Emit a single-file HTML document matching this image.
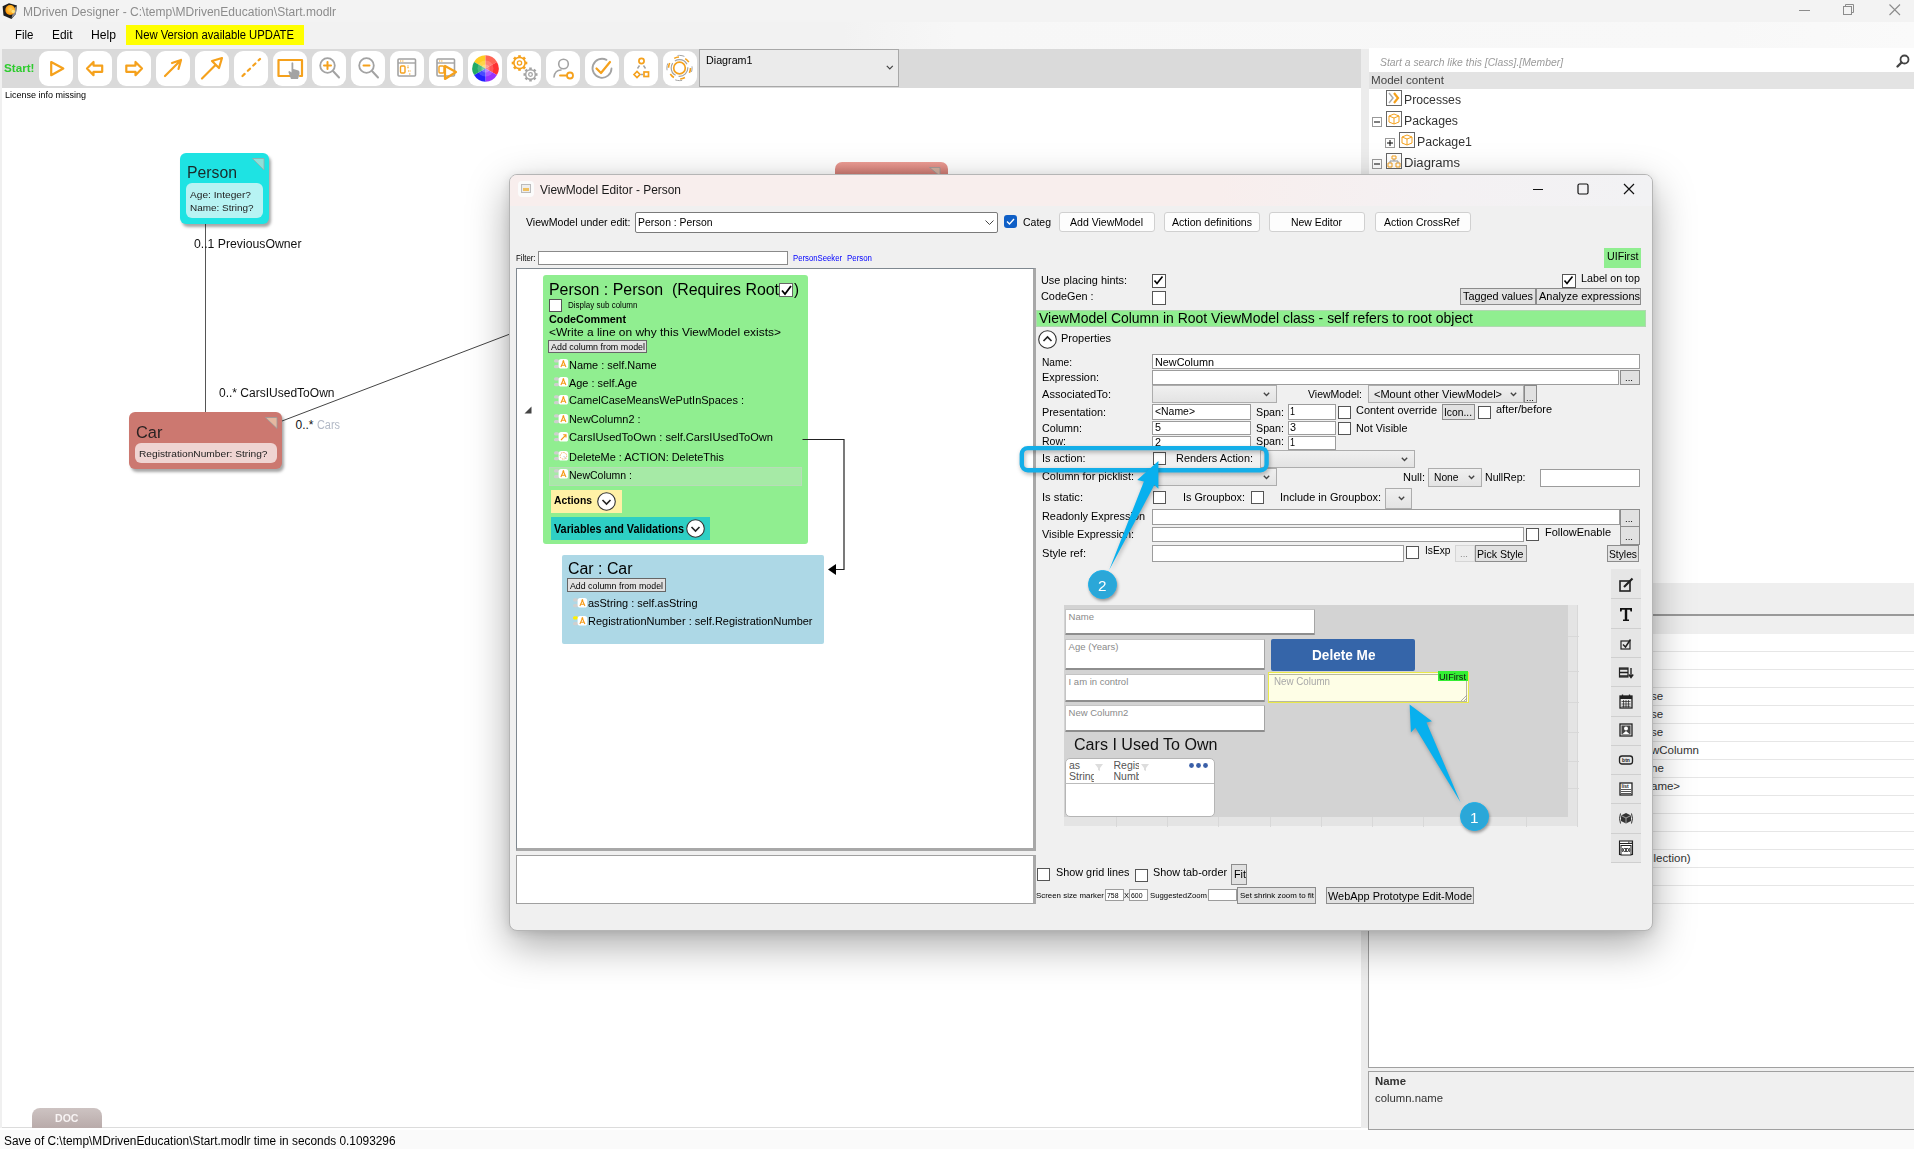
<!DOCTYPE html>
<html><head><meta charset="utf-8">
<style>
*{box-sizing:border-box;margin:0;padding:0}
html,body{width:1914px;height:1149px;overflow:hidden;background:#f0f0f0;font-family:"Liberation Sans",sans-serif;font-size:12px;color:#000;position:relative}
.a{position:absolute}
.t{position:absolute;white-space:pre;line-height:1}
.s{position:absolute;overflow:visible}
</style></head><body>
<div class="a" style="left:0px;top:0px;width:1914px;height:22px;background:#f3f3f3"></div>
<div class="a" style="left:0px;top:22px;width:1914px;height:27px;background:linear-gradient(90deg,#f2f2f2 0%,#f2f2f2 44%,#f7f7f7 50%,#f8f8f8 90%,#fafafa 100%)"></div>
<svg class="s" style="left:0px;top:0px;" width="20" height="22" viewBox="0 0 20 22"><defs><radialGradient id="sg" cx="0.55" cy="0.45" r="0.6"><stop offset="0" stop-color="#ffd060"/><stop offset="0.6" stop-color="#ffae20"/><stop offset="1" stop-color="#ff8a00"/></radialGradient></defs><polygon points="9,3.2 17,5.5 15.8,14 11.5,19 3.5,15.5 2.6,6.3" fill="#1e1e1e"/><polygon points="14.5,8 16.8,5.8 15.8,14 11.5,18.5 12.5,14" fill="#8a8a90"/><circle cx="10.2" cy="10" r="4.9" fill="url(#sg)"/><circle cx="13.3" cy="11.5" r="1.8" fill="#fff6a0" opacity="0.7"/></svg>
<div class="t" style="left:22.70px;top:6.00px;font-size:12px;color:#8c8c8c;transform:scaleX(1.0029);transform-origin:0 0;">MDriven Designer - C:\temp\MDrivenEducation\Start.modlr</div>
<div class="a" style="left:1799px;top:10px;width:11px;height:1px;background:#8c8c8c"></div>
<svg class="s" style="left:1843px;top:4px;" width="12" height="12" viewBox="0 0 12 12"><rect x="0.5" y="2.5" width="8" height="8" fill="none" stroke="#8c8c8c"/><path d="M2.5 2.5V0.5H10.5V8.5H8.5" fill="none" stroke="#8c8c8c"/></svg>
<svg class="s" style="left:1889px;top:4px;" width="12" height="12" viewBox="0 0 12 12"><path d="M0.5 0.5L11 11M11 0.5L0.5 11" stroke="#8c8c8c" stroke-width="1.1"/></svg>
<div class="t" style="left:15.20px;top:29.00px;font-size:12.5px;transform:scaleX(0.9185);transform-origin:0 0;">File</div>
<div class="t" style="left:52.00px;top:29.00px;font-size:12.5px;transform:scaleX(0.9518);transform-origin:0 0;">Edit</div>
<div class="t" style="left:91.00px;top:29.00px;font-size:12.5px;transform:scaleX(0.9725);transform-origin:0 0;">Help</div>
<div class="a" style="left:126px;top:25px;width:178px;height:20px;background:#ffff00"></div>
<div class="t" style="left:135.40px;top:29.00px;font-size:12.5px;transform:scaleX(0.9022);transform-origin:0 0;">New Version available UPDATE</div>
<div class="a" style="left:2px;top:49px;width:1359px;height:39px;background:#dadada"></div>
<div class="t" style="left:4.00px;top:63.00px;font-size:10.5px;font-weight:bold;color:#2ecc2e;transform:scaleX(1.1124);transform-origin:0 0;">Start!</div>
<div class="a" style="left:39px;top:51px;width:34px;height:35px;background:#fff;border-radius:9px"></div>
<div class="a" style="left:78px;top:51px;width:34px;height:35px;background:#fff;border-radius:9px"></div>
<div class="a" style="left:117px;top:51px;width:34px;height:35px;background:#fff;border-radius:9px"></div>
<div class="a" style="left:156px;top:51px;width:34px;height:35px;background:#fff;border-radius:9px"></div>
<div class="a" style="left:195px;top:51px;width:34px;height:35px;background:#fff;border-radius:9px"></div>
<div class="a" style="left:234px;top:51px;width:34px;height:35px;background:#fff;border-radius:9px"></div>
<div class="a" style="left:273px;top:51px;width:34px;height:35px;background:#fff;border-radius:9px"></div>
<div class="a" style="left:312px;top:51px;width:34px;height:35px;background:#fff;border-radius:9px"></div>
<div class="a" style="left:351px;top:51px;width:34px;height:35px;background:#fff;border-radius:9px"></div>
<div class="a" style="left:390px;top:51px;width:34px;height:35px;background:#fff;border-radius:9px"></div>
<div class="a" style="left:429px;top:51px;width:34px;height:35px;background:#fff;border-radius:9px"></div>
<div class="a" style="left:468px;top:51px;width:34px;height:35px;background:#fff;border-radius:9px"></div>
<div class="a" style="left:507px;top:51px;width:34px;height:35px;background:#fff;border-radius:9px"></div>
<div class="a" style="left:546px;top:51px;width:34px;height:35px;background:#fff;border-radius:9px"></div>
<div class="a" style="left:585px;top:51px;width:34px;height:35px;background:#fff;border-radius:9px"></div>
<div class="a" style="left:624px;top:51px;width:34px;height:35px;background:#fff;border-radius:9px"></div>
<div class="a" style="left:663px;top:51px;width:34px;height:35px;background:#fff;border-radius:9px"></div>
<svg class="s" style="left:39px;top:51px;" width="34" height="34" viewBox="0 0 34 34"><path d="M12.2 11L24.3 17.5L12.2 24.2Z" stroke="#f5a11c" stroke-width="2.2" stroke-linecap="round" stroke-linejoin="round" fill="none"/></svg>
<svg class="s" style="left:78px;top:51px;" width="34" height="34" viewBox="0 0 34 34"><path d="M9 17.5L15.5 11V14.6H24.2V20.8H15.5V24.2Z" stroke="#f5a11c" stroke-width="2.2" stroke-linecap="round" stroke-linejoin="round" fill="none"/></svg>
<svg class="s" style="left:117px;top:51px;" width="34" height="34" viewBox="0 0 34 34"><path d="M25 17.5L18.5 11V14.6H9.3V20.8H18.5V24.2Z" stroke="#f5a11c" stroke-width="2.2" stroke-linecap="round" stroke-linejoin="round" fill="none"/></svg>
<svg class="s" style="left:156px;top:51px;" width="34" height="34" viewBox="0 0 34 34"><path d="M9 25L25 9M16 12L25 9L22.5 18" stroke="#f5a11c" stroke-width="2.2" stroke-linecap="round" stroke-linejoin="round" fill="none"/></svg>
<svg class="s" style="left:195px;top:51px;" width="34" height="34" viewBox="0 0 34 34"><path d="M7 27.5L20 14.5" stroke="#f5a11c" stroke-width="2.2" stroke-linecap="round" stroke-linejoin="round" fill="none"/><path d="M27 7L17 10L24 17Z" stroke="#f5a11c" stroke-width="2.2" stroke-linecap="round" stroke-linejoin="round" fill="none"/></svg>
<svg class="s" style="left:234px;top:51px;" width="34" height="34" viewBox="0 0 34 34"><path d="M8.5 25L26 8" stroke="#f5a11c" stroke-width="2.2" stroke-linecap="round" stroke-dasharray="3 4.5"/></svg>
<svg class="s" style="left:273px;top:51px;" width="34" height="34" viewBox="0 0 34 34"><path d="M19 25H5.5V9H29V25H27" stroke="#f5a11c" stroke-width="2.2" stroke-linecap="round" stroke-linejoin="round" fill="none"/><path d="M18 28L15.5 21.5Q15 20 16.5 20L18.5 21.5V12Q19 10.5 20.3 12V18L25.5 19.5Q27 20 26.5 23L25 28Z" fill="#a3a3a3"/></svg>
<svg class="s" style="left:312px;top:51px;" width="34" height="34" viewBox="0 0 34 34"><circle cx="15.5" cy="14.5" r="7.3" stroke="#a3a3a3" stroke-width="1.8" fill="none"/><path d="M21 20L27 26.5" stroke="#a3a3a3" stroke-width="2" stroke-linecap="round"/><path d="M15.5 11V18M12 14.5H19" stroke="#f5a11c" stroke-width="2" stroke-linecap="round"/></svg>
<svg class="s" style="left:351px;top:51px;" width="34" height="34" viewBox="0 0 34 34"><circle cx="15.5" cy="14.5" r="7.3" stroke="#a3a3a3" stroke-width="1.8" fill="none"/><path d="M21 20L27 26.5" stroke="#a3a3a3" stroke-width="2" stroke-linecap="round"/><path d="M12.5 14.5H18.5" stroke="#f5a11c" stroke-width="2" stroke-linecap="round"/></svg>
<svg class="s" style="left:390px;top:51px;" width="34" height="34" viewBox="0 0 34 34"><rect x="8" y="8" width="17.5" height="17" rx="1" stroke="#a3a3a3" stroke-width="1.6" fill="none"/><path d="M8 12H25.5" stroke="#a3a3a3" stroke-width="1.4"/><path d="M10 10H14" stroke="#f5a11c" stroke-width="1.2" stroke-dasharray="1 0.8"/><rect x="10.5" y="15" width="4.5" height="7" rx="1" stroke="#f5a11c" stroke-width="1.4" fill="none"/><path d="M18 14.5V18M18 20H21M19 23H21" stroke="#f5a11c" stroke-width="1.2" stroke-dasharray="1 0.6"/></svg>
<svg class="s" style="left:429px;top:51px;" width="34" height="34" viewBox="0 0 34 34"><rect x="8" y="8" width="17.5" height="17" rx="1" stroke="#a3a3a3" stroke-width="1.6" fill="none"/><path d="M8 12H25.5" stroke="#a3a3a3" stroke-width="1.4"/><path d="M10 10H14" stroke="#f5a11c" stroke-width="1.2" stroke-dasharray="1 0.8"/><rect x="10" y="15" width="5" height="7" rx="1" stroke="#f5a11c" stroke-width="1.4" fill="none"/><path d="M16 15V28L27 21Z" stroke="#f5a11c" stroke-width="2.2" stroke-linecap="round" stroke-linejoin="round" fill="none" fill="#fff"/></svg>
<svg class="s" style="left:468px;top:51px;" width="34" height="34" viewBox="0 0 34 34"><path d="M17.5 17.5L6.07 10.90A13.2 13.2 0 0 1 17.50 4.30Z" fill="#ffcc22"/><path d="M17.5 17.5L17.50 4.30A13.2 13.2 0 0 1 28.93 10.90Z" fill="#ff6655"/><path d="M17.5 17.5L28.93 10.90A13.2 13.2 0 0 1 28.93 24.10Z" fill="#ff3333"/><path d="M17.5 17.5L28.93 24.10A13.2 13.2 0 0 1 17.50 30.70Z" fill="#9933ff"/><path d="M17.5 17.5L17.50 30.70A13.2 13.2 0 0 1 6.07 24.10Z" fill="#2222ff"/><path d="M17.5 17.5L6.07 24.10A13.2 13.2 0 0 1 6.07 10.90Z" fill="#22aa66"/><circle cx="17.5" cy="17.5" r="8" fill="#fff" opacity="0.18"/><circle cx="17.5" cy="17.5" r="4" fill="#fff" opacity="0.25"/></svg>
<svg class="s" style="left:507px;top:51px;" width="34" height="34" viewBox="0 0 34 34"><path d="M18.10 12.00L20.30 12.00" stroke="#f5a11c" stroke-width="2.6"/><path d="M16.46 15.96L18.02 17.52" stroke="#f5a11c" stroke-width="2.6"/><path d="M12.50 17.60L12.50 19.80" stroke="#f5a11c" stroke-width="2.6"/><path d="M8.54 15.96L6.98 17.52" stroke="#f5a11c" stroke-width="2.6"/><path d="M6.90 12.00L4.70 12.00" stroke="#f5a11c" stroke-width="2.6"/><path d="M8.54 8.04L6.98 6.48" stroke="#f5a11c" stroke-width="2.6"/><path d="M12.50 6.40L12.50 4.20" stroke="#f5a11c" stroke-width="2.6"/><path d="M16.46 8.04L18.02 6.48" stroke="#f5a11c" stroke-width="2.6"/><circle cx="12.5" cy="12" r="5.6" stroke="#f5a11c" stroke-width="1.6" fill="none"/><circle cx="12.5" cy="12" r="2.13" stroke="#f5a11c" stroke-width="1.3" fill="none"/><path d="M28.30 23.50L30.50 23.50" stroke="#a3a3a3" stroke-width="2.6"/><path d="M26.89 26.89L28.45 28.45" stroke="#a3a3a3" stroke-width="2.6"/><path d="M23.50 28.30L23.50 30.50" stroke="#a3a3a3" stroke-width="2.6"/><path d="M20.11 26.89L18.55 28.45" stroke="#a3a3a3" stroke-width="2.6"/><path d="M18.70 23.50L16.50 23.50" stroke="#a3a3a3" stroke-width="2.6"/><path d="M20.11 20.11L18.55 18.55" stroke="#a3a3a3" stroke-width="2.6"/><path d="M23.50 18.70L23.50 16.50" stroke="#a3a3a3" stroke-width="2.6"/><path d="M26.89 20.11L28.45 18.55" stroke="#a3a3a3" stroke-width="2.6"/><circle cx="23.5" cy="23.5" r="4.8" stroke="#a3a3a3" stroke-width="1.4" fill="none"/><circle cx="23.5" cy="23.5" r="1.82" stroke="#a3a3a3" stroke-width="1.3" fill="none"/></svg>
<svg class="s" style="left:546px;top:51px;" width="34" height="34" viewBox="0 0 34 34"><circle cx="17.5" cy="13" r="4.8" stroke="#a3a3a3" stroke-width="1.6" fill="none"/><path d="M8 26Q9 19 15 19" stroke="#a3a3a3" stroke-width="1.6" fill="none" stroke-linecap="round"/><path d="M14 24.5H21" stroke="#f5a11c" stroke-width="1.8" stroke-linecap="round"/><circle cx="24" cy="24.5" r="3" stroke="#f5a11c" stroke-width="1.8" fill="none"/></svg>
<svg class="s" style="left:585px;top:51px;" width="34" height="34" viewBox="0 0 34 34"><path d="M26.5 17.5A9.5 9.5 0 1 1 21.5 8.9" stroke="#a3a3a3" stroke-width="1.8" fill="none" stroke-linecap="round"/><path d="M11.5 17.5L16 22L25 11" stroke="#f5a11c" stroke-width="2.2" stroke-linecap="round" stroke-linejoin="round" fill="none"/></svg>
<svg class="s" style="left:624px;top:51px;" width="34" height="34" viewBox="0 0 34 34"><circle cx="17.5" cy="10" r="2.6" stroke="#f5a11c" stroke-width="1.7" fill="none"/><path d="M10 23.5L13 20.5L16 23.5L13 26.5Z" stroke="#f5a11c" stroke-width="1.7" fill="none"/><rect x="20" y="21" width="4.5" height="4.5" stroke="#f5a11c" stroke-width="1.7" fill="none"/><path d="M15.5 14.5L13.5 17.5M19.5 14.5L21.5 17.5M17 23.5H19" stroke="#a3a3a3" stroke-width="1.4"/></svg>
<svg class="s" style="left:663px;top:51px;" width="34" height="34" viewBox="0 0 34 34"><circle cx="16.5" cy="17" r="5.8" stroke="#f5a11c" stroke-width="1.7" fill="none"/><circle cx="16.5" cy="17" r="8.3" stroke="#a3a3a3" stroke-width="1.2" fill="none" stroke-dasharray="14 3"/><circle cx="16.5" cy="17" r="11" stroke="#f5a11c" stroke-width="1.6" fill="none" stroke-dasharray="5 6.5"/><circle cx="16.5" cy="17" r="12.6" stroke="#a3a3a3" stroke-width="1" fill="none" stroke-dasharray="7 13" stroke-dashoffset="3"/></svg>
<div class="a" style="left:699px;top:49px;width:200px;height:38px;background:#ebebeb;border:1px solid #a8a8a8"></div>
<div class="t" style="left:705.80px;top:55.00px;font-size:11.5px;transform:scaleX(0.9328);transform-origin:0 0;">Diagram1</div>
<svg class="s" style="left:886px;top:65px;" width="8" height="5" viewBox="0 0 8 5"><path d="M0.8 0.8L3.8 3.8L6.8 0.8" fill="none" stroke="#444" stroke-width="1.2"/></svg>
<div class="a" style="left:2px;top:88px;width:1359px;height:1040px;background:#fff"></div>
<div class="a" style="left:2px;top:1127px;width:1359px;height:1px;background:#dcdcdc"></div>
<div class="t" style="left:4.80px;top:91.00px;font-size:9px;transform:scaleX(0.9996);transform-origin:0 0;">License info missing</div>
<div class="a" style="left:1361px;top:49px;width:8px;height:1081px;background:#ececec"></div>
<div class="a" style="left:32px;top:1108px;width:70px;height:20px;background:linear-gradient(#cdc3c2,#b9abaa);border-radius:8px 8px 0 0"></div>
<div class="t" style="left:54.90px;top:1113.00px;font-size:11px;font-weight:bold;color:#f8f4f4;transform:scaleX(0.9614);transform-origin:0 0;">DOC</div>
<div class="a" style="left:0px;top:1128px;width:1914px;height:2px;background:#fff"></div>
<div class="a" style="left:0px;top:1130px;width:1914px;height:19px;background:#fafafa"></div>
<div class="t" style="left:4.40px;top:1135.00px;font-size:12px;transform:scaleX(0.9882);transform-origin:0 0;">Save of C:\temp\MDrivenEducation\Start.modlr time in seconds 0.1093296</div>
<svg class="s" style="left:0px;top:0px;left:0;top:0" width="1914" height="1149" viewBox="0 0 1914 1149"><path d="M205.5 224V412" stroke="#555" stroke-width="1"/><path d="M282 421L510 334" stroke="#444" stroke-width="1"/></svg>
<div class="a" style="left:180px;top:153px;width:89px;height:71px;background:#1ee3e3;border-radius:6px;box-shadow:2px 3px 3px rgba(0,0,0,0.35)"></div>
<div class="a" style="left:186px;top:183px;width:77px;height:35px;background:#b7f3f3;border-radius:6px"></div>
<svg class="s" style="left:252px;top:158px;" width="13" height="13" viewBox="0 0 13 13"><path d="M0.5 0.5H12V12Z" fill="#8ee0d8" stroke="#9aa" stroke-width="0.8"/></svg>
<div class="t" style="left:187.00px;top:165.00px;font-size:16.8px;color:#1a2a2a;transform:scaleX(0.9394);transform-origin:0 0;">Person</div>
<div class="t" style="left:189.60px;top:191.00px;font-size:9px;color:#222;transform:scaleX(1.1289);transform-origin:0 0;">Age: Integer?</div>
<div class="t" style="left:189.60px;top:204.00px;font-size:9px;color:#222;transform:scaleX(1.1039);transform-origin:0 0;">Name: String?</div>
<div class="t" style="left:193.50px;top:238.00px;font-size:12px;color:#111;transform:scaleX(1.0202);transform-origin:0 0;">0..1 PreviousOwner</div>
<div class="a" style="left:129px;top:412px;width:153px;height:57px;background:#cc7870;border-radius:6px;box-shadow:2px 3px 3px rgba(0,0,0,0.35)"></div>
<div class="a" style="left:134.5px;top:442.5px;width:142px;height:20.5px;background:#efd4d2;border-radius:6px"></div>
<svg class="s" style="left:265px;top:417px;" width="13" height="12" viewBox="0 0 13 12"><path d="M0.5 0.5H12V11.5Z" fill="#e5b8a0" stroke="#999" stroke-width="0.8"/></svg>
<div class="t" style="left:135.60px;top:425.00px;font-size:16.8px;color:#2a2222;transform:scaleX(0.9790);transform-origin:0 0;">Car</div>
<div class="t" style="left:138.60px;top:450.00px;font-size:9px;color:#222;transform:scaleX(1.1317);transform-origin:0 0;">RegistrationNumber: String?</div>
<div class="t" style="left:218.60px;top:387.00px;font-size:12px;color:#111;transform:scaleX(1.0011);transform-origin:0 0;">0..* CarsIUsedToOwn</div>
<div class="t" style="left:295.50px;top:419.00px;font-size:12px;color:#111;">0..* </div>
<div class="t" style="left:317.00px;top:419.00px;font-size:12px;color:#b2b9c6;transform:scaleX(0.9078);transform-origin:0 0;">Cars</div>
<div class="a" style="left:835px;top:162px;width:113px;height:20px;background:linear-gradient(#ee9d95,#cf7c74 60%,#c77770);border-radius:7px"></div>
<svg class="s" style="left:929px;top:167px;" width="12" height="9" viewBox="0 0 12 9"><path d="M0.5 0.5H11V9Z" fill="#d4b0a0" stroke="#999" stroke-width="0.8"/></svg>
<div class="a" style="left:1369px;top:48px;width:545px;height:1019px;background:#fff"></div>
<div class="a" style="left:1369px;top:1067px;width:545px;height:1px;background:#a0a0a0"></div>
<div class="a" style="left:1368px;top:583px;width:1px;height:485px;background:#a0a0a0"></div>
<div class="t" style="left:1380.20px;top:57.00px;font-size:11.5px;font-style:italic;color:#9a9a9a;transform:scaleX(0.9005);transform-origin:0 0;">Start a search like this [Class].[Member]</div>
<svg class="s" style="left:1896px;top:54px;" width="14" height="14" viewBox="0 0 14 14"><circle cx="8.5" cy="5.5" r="4" stroke="#444" stroke-width="1.8" fill="none"/><path d="M5.5 8.5L1.5 12.5" stroke="#444" stroke-width="2.4" stroke-linecap="round"/></svg>
<div class="a" style="left:1369px;top:72px;width:545px;height:16.5px;background:#e3e3e3"></div>
<div class="t" style="left:1371.40px;top:75.00px;font-size:11px;color:#444;transform:scaleX(1.0565);transform-origin:0 0;">Model content</div>
<svg class="s" style="left:1386px;top:90px;" width="16" height="16" viewBox="0 0 16 16"><rect x="0.5" y="0.5" width="15" height="15" fill="#fff" stroke="#666" stroke-width="1"/><path d="M3 3L7 8L3 13" stroke="#aaa" stroke-width="1.5" fill="none"/><path d="M8 3L12 8L8 13" stroke="#f5a11c" stroke-width="2.2" fill="none"/></svg>
<div class="t" style="left:1404.30px;top:94.00px;font-size:12.5px;color:#333;transform:scaleX(0.9768);transform-origin:0 0;">Processes</div>
<svg class="s" style="left:1372px;top:117px;" width="10" height="10" viewBox="0 0 10 10"><rect x="0.5" y="0.5" width="9" height="9" fill="#fff" stroke="#999"/><path d="M2 5H8" stroke="#000"/></svg>
<svg class="s" style="left:1386px;top:111px;" width="16" height="16" viewBox="0 0 16 16"><rect x="0.5" y="0.5" width="15" height="15" fill="#fff" stroke="#666" stroke-width="1"/><path d="M3 5L8 3L13 5V11L8 13L3 11Z" stroke="#f5a11c" stroke-width="1" fill="none"/><path d="M3 5L8 7L13 5M8 7V13" stroke="#f5a11c" stroke-width="1" fill="none"/></svg>
<div class="t" style="left:1404.30px;top:115.00px;font-size:12.5px;color:#333;transform:scaleX(0.9837);transform-origin:0 0;">Packages</div>
<svg class="s" style="left:1385px;top:138px;" width="10" height="10" viewBox="0 0 10 10"><rect x="0.5" y="0.5" width="9" height="9" fill="#fff" stroke="#999"/><path d="M2 5H8M5 2V8" stroke="#000"/></svg>
<svg class="s" style="left:1399px;top:132px;" width="16" height="16" viewBox="0 0 16 16"><rect x="0.5" y="0.5" width="15" height="15" fill="#fff" stroke="#666" stroke-width="1"/><path d="M3 5L8 3L13 5V11L8 13L3 11Z" stroke="#f5a11c" stroke-width="1" fill="none"/><path d="M3 5L8 7L13 5M8 7V13" stroke="#f5a11c" stroke-width="1" fill="none"/></svg>
<div class="t" style="left:1417.30px;top:136.00px;font-size:12.5px;color:#333;transform:scaleX(0.9893);transform-origin:0 0;">Package1</div>
<svg class="s" style="left:1372px;top:159px;" width="10" height="10" viewBox="0 0 10 10"><rect x="0.5" y="0.5" width="9" height="9" fill="#fff" stroke="#999"/><path d="M2 5H8" stroke="#000"/></svg>
<svg class="s" style="left:1386px;top:153px;" width="16" height="16" viewBox="0 0 16 16"><rect x="0.5" y="0.5" width="15" height="15" fill="#fff" stroke="#666" stroke-width="1"/><path d="M6 3H10V6H6ZM2 10H6V14H2ZM10 10H14V14H10Z" stroke="#f5a11c" stroke-width="1" fill="none"/><path d="M8 6V8M4 10V8H12V10" stroke="#999" stroke-width="1" fill="none"/></svg>
<div class="t" style="left:1404.30px;top:157.00px;font-size:12.5px;color:#333;transform:scaleX(1.0471);transform-origin:0 0;">Diagrams</div>
<div class="a" style="left:1369px;top:583px;width:545px;height:51px;background:#efefef"></div>
<div class="a" style="left:1369px;top:614px;width:545px;height:1.5px;background:#999"></div>
<div class="a" style="left:1369px;top:651px;width:545px;height:1px;background:#e6e6e6"></div>
<div class="a" style="left:1369px;top:669px;width:545px;height:1px;background:#e6e6e6"></div>
<div class="a" style="left:1369px;top:687px;width:545px;height:1px;background:#e6e6e6"></div>
<div class="a" style="left:1369px;top:705px;width:545px;height:1px;background:#e6e6e6"></div>
<div class="a" style="left:1369px;top:723px;width:545px;height:1px;background:#e6e6e6"></div>
<div class="a" style="left:1369px;top:741px;width:545px;height:1px;background:#e6e6e6"></div>
<div class="a" style="left:1369px;top:759px;width:545px;height:1px;background:#e6e6e6"></div>
<div class="a" style="left:1369px;top:777px;width:545px;height:1px;background:#e6e6e6"></div>
<div class="a" style="left:1369px;top:795px;width:545px;height:1px;background:#e6e6e6"></div>
<div class="a" style="left:1369px;top:813px;width:545px;height:1px;background:#e6e6e6"></div>
<div class="a" style="left:1369px;top:831px;width:545px;height:1px;background:#e6e6e6"></div>
<div class="a" style="left:1369px;top:849px;width:545px;height:1px;background:#e6e6e6"></div>
<div class="a" style="left:1369px;top:867px;width:545px;height:1px;background:#e6e6e6"></div>
<div class="a" style="left:1369px;top:885px;width:545px;height:1px;background:#e6e6e6"></div>
<div class="a" style="left:1369px;top:903px;width:545px;height:1px;background:#e6e6e6"></div>
<div class="t" style="left:1651.00px;top:691.00px;font-size:11.5px;color:#333;">se</div>
<div class="t" style="left:1651.00px;top:709.00px;font-size:11.5px;color:#333;">se</div>
<div class="t" style="left:1651.00px;top:727.00px;font-size:11.5px;color:#333;">se</div>
<div class="t" style="left:1651.00px;top:745.00px;font-size:11.5px;color:#333;">wColumn</div>
<div class="t" style="left:1651.00px;top:763.00px;font-size:11.5px;color:#333;">ne</div>
<div class="t" style="left:1651.00px;top:781.00px;font-size:11.5px;color:#333;">ame&gt;</div>
<div class="t" style="left:1651.00px;top:853.00px;font-size:11.5px;color:#333;">llection)</div>
<div class="a" style="left:1368px;top:1071px;width:546px;height:59px;background:#f0f0f0;border:1px solid #a0a0a0;border-right:none"></div>
<div class="t" style="left:1374.50px;top:1076.00px;font-size:11px;font-weight:bold;color:#333;transform:scaleX(1.0347);transform-origin:0 0;">Name</div>
<div class="t" style="left:1374.50px;top:1093.00px;font-size:11px;color:#333;transform:scaleX(1.0299);transform-origin:0 0;">column.name</div>
<div class="a" style="left:509px;top:174px;width:1144px;height:757px;background:#f0f0f0;border:1px solid #b5b5b5;border-radius:8px;box-shadow:0 14px 40px rgba(0,0,0,0.34),0 2px 10px rgba(0,0,0,0.10)"></div>
<div class="a" style="left:510px;top:175px;width:1142px;height:31px;background:linear-gradient(90deg,#f8eeed 0%,#f8eeed 62%,#f4f1f3 82%,#f2f2f4 100%);border-radius:7px 7px 0 0"></div>
<div class="a" style="left:518px;top:181px;width:16px;height:16px;background:#fbfbfb;border-radius:4px"></div>
<svg class="s" style="left:521px;top:184px;" width="10" height="9" viewBox="0 0 10 9"><rect x="0.5" y="0.5" width="9" height="8" fill="#eee" stroke="#bbb"/><rect x="2" y="4" width="6" height="3" fill="#f0c060"/></svg>
<div class="t" style="left:540.00px;top:184.00px;font-size:12.5px;color:#1a1a1a;transform:scaleX(0.9543);transform-origin:0 0;">ViewModel Editor - Person</div>
<div class="a" style="left:1533px;top:189px;width:10px;height:1.2px;background:#111"></div>
<svg class="s" style="left:1577px;top:183px;" width="12" height="12" viewBox="0 0 12 12"><rect x="1" y="1" width="10" height="10" rx="1.5" stroke="#111" stroke-width="1.2" fill="none"/></svg>
<svg class="s" style="left:1623px;top:183px;" width="12" height="12" viewBox="0 0 12 12"><path d="M1 1L11 11M11 1L1 11" stroke="#111" stroke-width="1.2"/></svg>
<div class="t" style="left:526.10px;top:217.00px;font-size:11.5px;transform:scaleX(0.9201);transform-origin:0 0;">ViewModel under edit:</div>
<div class="a" style="left:635px;top:212px;width:363px;height:21px;background:#fff;border:1px solid #7a7a7a;border-radius:2px"></div>
<div class="t" style="left:638.20px;top:217.00px;font-size:11.5px;transform:scaleX(0.9035);transform-origin:0 0;">Person : Person</div>
<svg class="s" style="left:985px;top:220px;" width="9" height="5" viewBox="0 0 9 5"><path d="M0.5 0.5L4.5 4.5L8.5 0.5" stroke="#444" stroke-width="1" fill="none"/></svg>
<div class="a" style="left:1004px;top:215px;width:13px;height:13px;background:#0f5fc6;border-radius:3px"></div>
<svg class="s" style="left:1004px;top:215px;" width="13" height="13" viewBox="0 0 13 13"><path d="M3 6.5L5.5 9L10 4" stroke="#fff" stroke-width="1.3" fill="none"/></svg>
<div class="t" style="left:1022.60px;top:217.00px;font-size:11.5px;transform:scaleX(0.9125);transform-origin:0 0;">Categ</div>
<div class="a" style="left:1059.3px;top:211.5px;width:96px;height:20px;background:#fdfdfd;border:1px solid #d0d0d0;border-radius:3px"></div>
<div class="a" style="left:1164.37px;top:211.5px;width:96px;height:20px;background:#fdfdfd;border:1px solid #d0d0d0;border-radius:3px"></div>
<div class="a" style="left:1269.44px;top:211.5px;width:96px;height:20px;background:#fdfdfd;border:1px solid #d0d0d0;border-radius:3px"></div>
<div class="a" style="left:1374.51px;top:211.5px;width:96px;height:20px;background:#fdfdfd;border:1px solid #d0d0d0;border-radius:3px"></div>
<div class="t" style="left:1070.00px;top:217.00px;font-size:11.5px;transform:scaleX(0.9160);transform-origin:0 0;">Add ViewModel</div>
<div class="t" style="left:1172.00px;top:217.00px;font-size:11.5px;transform:scaleX(0.9202);transform-origin:0 0;">Action definitions</div>
<div class="t" style="left:1291.00px;top:217.00px;font-size:11.5px;transform:scaleX(0.9068);transform-origin:0 0;">New Editor</div>
<div class="t" style="left:1384.00px;top:217.00px;font-size:11.5px;transform:scaleX(0.9088);transform-origin:0 0;">Action CrossRef</div>
<div class="t" style="left:516.00px;top:254.00px;font-size:8.5px;transform:scaleX(0.9177);transform-origin:0 0;">Filter:</div>
<div class="a" style="left:538px;top:251px;width:250px;height:14px;background:#fff;border:1px solid #8a8a8a"></div>
<div class="t" style="left:792.50px;top:254.00px;font-size:8.5px;color:#0000ff;transform:scaleX(0.9098);transform-origin:0 0;">PersonSeeker</div>
<div class="t" style="left:847.00px;top:254.00px;font-size:8.5px;color:#0000ff;transform:scaleX(0.9283);transform-origin:0 0;">Person</div>
<div class="a" style="left:516px;top:268px;width:520px;height:583px;background:#fff;border:1px solid #7f8890;border-right:3px solid #a8a8a8;border-bottom:3px solid #a8a8a8"></div>
<div class="a" style="left:516px;top:855px;width:520px;height:49px;background:#fff;border:1px solid #a0a0a0;border-right:3px solid #a8a8a8"></div>
<svg class="s" style="left:524px;top:406px;" width="8" height="8" viewBox="0 0 8 8"><path d="M7.5 0.5V7.5H0.5Z" fill="#444"/></svg>
<div class="a" style="left:543px;top:275px;width:265px;height:269px;background:#90ee90;border-radius:3px"></div>
<div class="t" style="left:548.60px;top:282.00px;font-size:16px;transform:scaleX(0.9948);transform-origin:0 0;">Person : Person  (Requires Root</div>
<svg class="s" style="left:779px;top:283px;" width="15" height="15" viewBox="0 0 15 15"><rect x="0.5" y="0.5" width="13" height="13" fill="#fff" stroke="#666"/><path d="M3 7.5L6 11L12 3" stroke="#000" stroke-width="1.8" fill="none"/></svg>
<div class="t" style="left:794.00px;top:282.00px;font-size:16px;transform:scaleX(0.9385);transform-origin:0 0;">)</div>
<svg class="s" style="left:549px;top:299px;" width="13" height="13" viewBox="0 0 13 13"><rect x="0.5" y="0.5" width="12" height="12" fill="#fff" stroke="#555" stroke-width="1"/></svg>
<div class="t" style="left:568.30px;top:301.00px;font-size:8.3px;transform:scaleX(0.9658);transform-origin:0 0;">Display sub column</div>
<div class="t" style="left:548.60px;top:314.00px;font-size:11.5px;font-weight:bold;transform:scaleX(0.9416);transform-origin:0 0;">CodeComment</div>
<div class="t" style="left:548.60px;top:327.00px;font-size:11.5px;transform:scaleX(1.0390);transform-origin:0 0;">&lt;Write a line on why this ViewModel exists&gt;</div>
<div class="a" style="left:548px;top:340.3px;width:98.5px;height:12.5px;background:#e1e1e1;border:1px solid #666"></div>
<div class="t" style="left:550.50px;top:342.00px;font-size:9.5px;transform:scaleX(0.9371);transform-origin:0 0;">Add column from model</div>
<div class="a" style="left:549px;top:467px;width:253px;height:19px;background:#a6eaa6;border:1px solid #b8dcb8"></div>
<svg class="s" style="left:554px;top:358.2px;" width="15" height="12" viewBox="0 0 15 12"><rect x="0" y="1.3" width="5" height="3.3" rx="1.5" fill="#cfcfcf"/><rect x="0" y="7" width="5" height="3.3" rx="1.5" fill="#cfcfcf"/><rect x="4.6" y="1" width="9.6" height="9.5" rx="2.6" fill="#fff"/><path d="M6.9 9L9.4 3.3L11.9 9M7.7 7.3H11.1" stroke="#f59a16" stroke-width="1.1" fill="none"/><circle cx="9.4" cy="3.2" r="0.9" fill="#f59a16"/></svg>
<div class="t" style="left:569.40px;top:360.00px;font-size:11.5px;transform:scaleX(0.9508);transform-origin:0 0;">Name : self.Name</div>
<svg class="s" style="left:554px;top:376.1px;" width="15" height="12" viewBox="0 0 15 12"><rect x="0" y="1.3" width="5" height="3.3" rx="1.5" fill="#cfcfcf"/><rect x="0" y="7" width="5" height="3.3" rx="1.5" fill="#cfcfcf"/><rect x="4.6" y="1" width="9.6" height="9.5" rx="2.6" fill="#fff"/><path d="M6.9 9L9.4 3.3L11.9 9M7.7 7.3H11.1" stroke="#f59a16" stroke-width="1.1" fill="none"/><circle cx="9.4" cy="3.2" r="0.9" fill="#f59a16"/></svg>
<div class="t" style="left:569.40px;top:378.00px;font-size:11.5px;transform:scaleX(0.9498);transform-origin:0 0;">Age : self.Age</div>
<svg class="s" style="left:554px;top:394.0px;" width="15" height="12" viewBox="0 0 15 12"><rect x="0" y="1.3" width="5" height="3.3" rx="1.5" fill="#cfcfcf"/><rect x="0" y="7" width="5" height="3.3" rx="1.5" fill="#cfcfcf"/><rect x="4.6" y="1" width="9.6" height="9.5" rx="2.6" fill="#fff"/><path d="M6.9 9L9.4 3.3L11.9 9M7.7 7.3H11.1" stroke="#f59a16" stroke-width="1.1" fill="none"/><circle cx="9.4" cy="3.2" r="0.9" fill="#f59a16"/></svg>
<div class="t" style="left:569.40px;top:395.00px;font-size:11.5px;transform:scaleX(0.9551);transform-origin:0 0;">CamelCaseMeansWePutInSpaces :</div>
<svg class="s" style="left:554px;top:412.6px;" width="15" height="12" viewBox="0 0 15 12"><rect x="0" y="1.3" width="5" height="3.3" rx="1.5" fill="#cfcfcf"/><rect x="0" y="7" width="5" height="3.3" rx="1.5" fill="#cfcfcf"/><rect x="4.6" y="1" width="9.6" height="9.5" rx="2.6" fill="#fff"/><path d="M6.9 9L9.4 3.3L11.9 9M7.7 7.3H11.1" stroke="#f59a16" stroke-width="1.1" fill="none"/><circle cx="9.4" cy="3.2" r="0.9" fill="#f59a16"/></svg>
<div class="t" style="left:569.40px;top:414.00px;font-size:11.5px;transform:scaleX(0.9481);transform-origin:0 0;">NewColumn2 :</div>
<svg class="s" style="left:554px;top:430.9px;" width="15" height="12" viewBox="0 0 15 12"><rect x="0" y="1.3" width="5" height="3.3" rx="1.5" fill="#cfcfcf"/><rect x="0" y="7" width="5" height="3.3" rx="1.5" fill="#cfcfcf"/><rect x="4.6" y="1" width="9.6" height="9.5" rx="2.6" fill="#fff"/><path d="M7 9L12 3.8M9.2 3.8H12V6.6" stroke="#f59a16" stroke-width="1.1" fill="none"/></svg>
<div class="t" style="left:569.40px;top:432.00px;font-size:11.5px;transform:scaleX(0.9673);transform-origin:0 0;">CarsIUsedToOwn : self.CarsIUsedToOwn</div>
<svg class="s" style="left:554px;top:450.1px;" width="15" height="12" viewBox="0 0 15 12"><rect x="0" y="1.3" width="5" height="3.3" rx="1.5" fill="#cfcfcf"/><rect x="0" y="7" width="5" height="3.3" rx="1.5" fill="#cfcfcf"/><rect x="4.6" y="1" width="9.6" height="9.5" rx="2.6" fill="#fff"/><circle cx="9.4" cy="5.8" r="3.3" stroke="#f5b060" stroke-width="1" fill="none" stroke-dasharray="1.5 1"/><path d="M9.5 6L12.5 9" stroke="#bbb" stroke-width="0.8"/></svg>
<div class="t" style="left:569.40px;top:452.00px;font-size:11.5px;transform:scaleX(0.9511);transform-origin:0 0;">DeleteMe : ACTION: DeleteThis</div>
<svg class="s" style="left:554px;top:468.4px;" width="15" height="12" viewBox="0 0 15 12"><rect x="0" y="1.3" width="5" height="3.3" rx="1.5" fill="#cfcfcf"/><rect x="0" y="7" width="5" height="3.3" rx="1.5" fill="#cfcfcf"/><rect x="4.6" y="1" width="9.6" height="9.5" rx="2.6" fill="#fff"/><path d="M6.9 9L9.4 3.3L11.9 9M7.7 7.3H11.1" stroke="#f59a16" stroke-width="1.1" fill="none"/><circle cx="9.4" cy="3.2" r="0.9" fill="#f59a16"/></svg>
<div class="t" style="left:569.40px;top:470.00px;font-size:11.5px;transform:scaleX(0.9128);transform-origin:0 0;">NewColumn :</div>
<svg class="s" style="left:800px;top:436px;" width="50" height="140" viewBox="0 0 50 140"><path d="M2.5 3.5H44V133.5H34" stroke="#222" stroke-width="1.2" fill="none"/><path d="M28 133.5L36 128V139Z" fill="#000"/></svg>
<div class="a" style="left:551px;top:490px;width:70.5px;height:22.5px;background:#fff1a6"></div>
<div class="t" style="left:554.40px;top:495.00px;font-size:11.8px;font-weight:bold;transform:scaleX(0.8783);transform-origin:0 0;">Actions</div>
<svg class="s" style="left:597px;top:491.5px;" width="19" height="19" viewBox="0 0 19 19"><circle cx="9.5" cy="9.5" r="8.8" fill="#fff" stroke="#333" stroke-width="1.1"/><path d="M5.5 8L9.5 12L13.5 8" stroke="#222" stroke-width="1.6" fill="none"/></svg>
<div class="a" style="left:551px;top:517.3px;width:159px;height:23px;background:#2ecfc4"></div>
<div class="t" style="left:554.40px;top:523.00px;font-size:12.3px;font-weight:bold;transform:scaleX(0.8805);transform-origin:0 0;">Variables and Validations</div>
<svg class="s" style="left:685.5px;top:519px;" width="19" height="19" viewBox="0 0 19 19"><circle cx="9.5" cy="9.5" r="8.8" fill="#fff" stroke="#333" stroke-width="1.1"/><path d="M5.5 8L9.5 12L13.5 8" stroke="#222" stroke-width="1.6" fill="none"/></svg>
<div class="a" style="left:562px;top:554.6px;width:262px;height:89px;background:#add8e6;border-radius:2px"></div>
<div class="t" style="left:567.50px;top:561.00px;font-size:16px;transform:scaleX(0.9939);transform-origin:0 0;">Car : Car</div>
<div class="a" style="left:567px;top:578px;width:99px;height:14px;background:#e1e1e1;border:1px solid #666"></div>
<div class="t" style="left:570.00px;top:581.00px;font-size:9.5px;transform:scaleX(0.9271);transform-origin:0 0;">Add column from model</div>
<svg class="s" style="left:573px;top:596.5px;" width="15" height="12" viewBox="0 0 15 12"><rect x="0" y="1.3" width="5" height="3.3" rx="1.5" fill="#cfcfcf"/><rect x="0" y="7" width="5" height="3.3" rx="1.5" fill="#cfcfcf"/><rect x="4.6" y="1" width="9.6" height="9.5" rx="2.6" fill="#fff"/><path d="M6.9 9L9.4 3.3L11.9 9M7.7 7.3H11.1" stroke="#f59a16" stroke-width="1.1" fill="none"/><circle cx="9.4" cy="3.2" r="0.9" fill="#f59a16"/></svg>
<div class="t" style="left:588.30px;top:598.00px;font-size:11.5px;transform:scaleX(0.9518);transform-origin:0 0;">asString : self.asString</div>
<svg class="s" style="left:573px;top:615.0px;" width="15" height="12" viewBox="0 0 15 12"><rect x="0" y="1.3" width="5" height="3.3" rx="1.5" fill="#ffee00"/><rect x="0" y="7" width="5" height="3.3" rx="1.5" fill="#cfcfcf"/><rect x="4.6" y="1" width="9.6" height="9.5" rx="2.6" fill="#fff"/><path d="M6.9 9L9.4 3.3L11.9 9M7.7 7.3H11.1" stroke="#f59a16" stroke-width="1.1" fill="none"/><circle cx="9.4" cy="3.2" r="0.9" fill="#f59a16"/></svg>
<div class="t" style="left:588.30px;top:616.00px;font-size:11.5px;transform:scaleX(0.9545);transform-origin:0 0;">RegistrationNumber : self.RegistrationNumber</div>
<div class="a" style="left:1604px;top:248px;width:37px;height:19.5px;background:#90ee90"></div>
<div class="t" style="left:1607.00px;top:251.00px;font-size:11.5px;transform:scaleX(0.9305);transform-origin:0 0;">UIFirst</div>
<div class="t" style="left:1041.40px;top:275.00px;font-size:11.5px;transform:scaleX(0.9475);transform-origin:0 0;">Use placing hints:</div>
<svg class="s" style="left:1152px;top:274px;" width="14" height="14" viewBox="0 0 14 14"><rect x="0.5" y="0.5" width="13" height="13" fill="#fff" stroke="#555" stroke-width="1"/><path d="M2.5 6.5L5 9.5L10.5 2.5" stroke="#000" stroke-width="1.6" fill="none"/></svg>
<div class="t" style="left:1041.40px;top:291.00px;font-size:11.5px;transform:scaleX(0.9440);transform-origin:0 0;">CodeGen :</div>
<svg class="s" style="left:1152px;top:290.5px;" width="14" height="14" viewBox="0 0 14 14"><rect x="0.5" y="0.5" width="13" height="13" fill="#fff" stroke="#555" stroke-width="1"/></svg>
<svg class="s" style="left:1562px;top:274px;" width="14" height="14" viewBox="0 0 14 14"><rect x="0.5" y="0.5" width="13" height="13" fill="#fff" stroke="#555" stroke-width="1"/><path d="M2.5 6.5L5 9.5L10.5 2.5" stroke="#000" stroke-width="1.6" fill="none"/></svg>
<div class="t" style="left:1581.00px;top:273.00px;font-size:11.5px;transform:scaleX(0.9321);transform-origin:0 0;">Label on top</div>
<div class="a" style="left:1460px;top:288px;width:76px;height:16.5px;background:#e1e1e1;border:1px solid #8c8c8c"></div>
<div class="t" style="left:1463.00px;top:291.00px;font-size:11.5px;transform:scaleX(0.9439);transform-origin:0 0;">Tagged values</div>
<div class="a" style="left:1535.5px;top:288px;width:105.5px;height:16.5px;background:#e1e1e1;border:1px solid #8c8c8c"></div>
<div class="t" style="left:1538.50px;top:291.00px;font-size:11.5px;transform:scaleX(0.9577);transform-origin:0 0;">Analyze expressions</div>
<div class="a" style="left:1036px;top:310px;width:610px;height:17px;background:#90ee90;border:1px solid #b0d8b0"></div>
<div class="t" style="left:1039.00px;top:310.00px;font-size:15px;transform:scaleX(0.9307);transform-origin:0 0;">ViewModel Column in Root ViewModel class - self refers to root object</div>
<svg class="s" style="left:1038px;top:330px;" width="19" height="19" viewBox="0 0 19 19"><circle cx="9.5" cy="9.5" r="8.8" fill="#fff" stroke="#333" stroke-width="1.1"/><path d="M5.5 11L9.5 7L13.5 11" stroke="#222" stroke-width="1.6" fill="none"/></svg>
<div class="t" style="left:1061.30px;top:333.00px;font-size:11.5px;transform:scaleX(0.9540);transform-origin:0 0;">Properties</div>
<div class="t" style="left:1042.20px;top:357.00px;font-size:11.5px;transform:scaleX(0.8858);transform-origin:0 0;">Name:</div>
<div class="a" style="left:1152.4px;top:354px;width:487.5px;height:15px;background:#fff;border:1px solid #9c9c9c"></div>
<div class="t" style="left:1155.00px;top:357.00px;font-size:11.5px;transform:scaleX(0.9420);transform-origin:0 0;">NewColumn</div>
<div class="t" style="left:1042.20px;top:372.00px;font-size:11.5px;transform:scaleX(0.9487);transform-origin:0 0;">Expression:</div>
<div class="a" style="left:1152.4px;top:369.5px;width:467px;height:15px;background:#fff;border:1px solid #9c9c9c"></div>
<div class="a" style="left:1619.5px;top:369.5px;width:20px;height:15px;background:#e1e1e1;border:1px solid #8c8c8c"></div>
<div class="t" style="left:1625.00px;top:374.00px;font-size:9px;transform:scaleX(1.0665);transform-origin:0 0;">...</div>
<div class="t" style="left:1042.20px;top:389.00px;font-size:11.5px;transform:scaleX(0.9638);transform-origin:0 0;">AssociatedTo:</div>
<div class="a" style="left:1152.4px;top:385px;width:125px;height:18px;background:linear-gradient(#f0f0f0,#e3e3e3);border:1px solid #adadad"></div>
<svg class="s" style="left:1263.4px;top:392.0px;" width="7" height="5" viewBox="0 0 7 5"><path d="M0.8 0.8L3.5 3.5L6.2 0.8" stroke="#444" stroke-width="1.3" fill="none"/></svg>
<div class="t" style="left:1308.00px;top:389.00px;font-size:11.5px;transform:scaleX(0.9117);transform-origin:0 0;">ViewModel:</div>
<div class="a" style="left:1368.4px;top:385px;width:155.5px;height:18px;background:linear-gradient(#f0f0f0,#e3e3e3);border:1px solid #adadad"></div>
<svg class="s" style="left:1509.9px;top:392.0px;" width="7" height="5" viewBox="0 0 7 5"><path d="M0.8 0.8L3.5 3.5L6.2 0.8" stroke="#444" stroke-width="1.3" fill="none"/></svg>
<div class="t" style="left:1374.00px;top:389.00px;font-size:11.5px;transform:scaleX(0.9550);transform-origin:0 0;">&lt;Mount other ViewModel&gt;</div>
<div class="a" style="left:1523.5px;top:385.4px;width:13.5px;height:18px;background:#e1e1e1;border:1px solid #8a8a8a"></div>
<div class="t" style="left:1526.00px;top:394.00px;font-size:9px;transform:scaleX(1.0665);transform-origin:0 0;">...</div>
<div class="t" style="left:1042.20px;top:407.00px;font-size:11.5px;transform:scaleX(0.9445);transform-origin:0 0;">Presentation:</div>
<div class="a" style="left:1152.4px;top:404px;width:99px;height:15.5px;background:#fff;border:1px solid #9c9c9c"></div>
<div class="t" style="left:1155.20px;top:406.00px;font-size:11.5px;transform:scaleX(0.9069);transform-origin:0 0;">&lt;Name&gt;</div>
<div class="t" style="left:1255.50px;top:407.00px;font-size:11.5px;transform:scaleX(0.9318);transform-origin:0 0;">Span:</div>
<div class="a" style="left:1287.7px;top:404px;width:48.5px;height:15.5px;background:#fff;border:1px solid #9c9c9c"></div>
<div class="t" style="left:1290.00px;top:406.00px;font-size:11.5px;transform:scaleX(0.7819);transform-origin:0 0;">1</div>
<svg class="s" style="left:1338.4px;top:405.7px;" width="13" height="13" viewBox="0 0 13 13"><rect x="0.5" y="0.5" width="12" height="12" fill="#fff" stroke="#555" stroke-width="1"/></svg>
<div class="t" style="left:1355.90px;top:405.00px;font-size:11.5px;transform:scaleX(0.9528);transform-origin:0 0;">Content override</div>
<div class="a" style="left:1442px;top:404px;width:33px;height:15.5px;background:#e1e1e1;border:1px solid #8c8c8c"></div>
<div class="t" style="left:1444.00px;top:407.00px;font-size:11.5px;transform:scaleX(0.8940);transform-origin:0 0;">Icon...</div>
<svg class="s" style="left:1477.7px;top:405.7px;" width="13" height="13" viewBox="0 0 13 13"><rect x="0.5" y="0.5" width="12" height="12" fill="#fff" stroke="#555" stroke-width="1"/></svg>
<div class="t" style="left:1495.80px;top:404.00px;font-size:11.5px;transform:scaleX(0.9522);transform-origin:0 0;">after/before</div>
<div class="t" style="left:1042.20px;top:423.00px;font-size:11.5px;transform:scaleX(0.9342);transform-origin:0 0;">Column:</div>
<div class="a" style="left:1152.4px;top:420.5px;width:99px;height:14.5px;background:#fff;border:1px solid #9c9c9c"></div>
<div class="t" style="left:1155.00px;top:422.00px;font-size:11.5px;transform:scaleX(0.9382);transform-origin:0 0;">5</div>
<div class="t" style="left:1255.50px;top:423.00px;font-size:11.5px;transform:scaleX(0.9318);transform-origin:0 0;">Span:</div>
<div class="a" style="left:1287.7px;top:420.5px;width:48.5px;height:14.5px;background:#fff;border:1px solid #9c9c9c"></div>
<div class="t" style="left:1290.00px;top:422.00px;font-size:11.5px;transform:scaleX(0.9382);transform-origin:0 0;">3</div>
<svg class="s" style="left:1338.4px;top:421.5px;" width="13" height="13" viewBox="0 0 13 13"><rect x="0.5" y="0.5" width="12" height="12" fill="#fff" stroke="#555" stroke-width="1"/></svg>
<div class="t" style="left:1355.90px;top:423.00px;font-size:11.5px;transform:scaleX(0.9405);transform-origin:0 0;">Not Visible</div>
<div class="t" style="left:1042.20px;top:436.00px;font-size:11.5px;transform:scaleX(0.9160);transform-origin:0 0;">Row:</div>
<div class="a" style="left:1152.4px;top:435.5px;width:99px;height:14px;background:#fff;border:1px solid #9c9c9c"></div>
<div class="t" style="left:1155.00px;top:437.00px;font-size:11.5px;transform:scaleX(0.9382);transform-origin:0 0;">2</div>
<div class="t" style="left:1255.50px;top:436.00px;font-size:11.5px;transform:scaleX(0.9318);transform-origin:0 0;">Span:</div>
<div class="a" style="left:1287.7px;top:435.5px;width:48.5px;height:14px;background:#fff;border:1px solid #9c9c9c"></div>
<div class="t" style="left:1290.00px;top:437.00px;font-size:11.5px;transform:scaleX(0.7819);transform-origin:0 0;">1</div>
<div class="t" style="left:1042.20px;top:453.00px;font-size:11.5px;transform:scaleX(0.9452);transform-origin:0 0;">Is action:</div>
<svg class="s" style="left:1153.4px;top:452.4px;" width="13" height="13" viewBox="0 0 13 13"><rect x="0.5" y="0.5" width="12" height="12" fill="#fff" stroke="#555" stroke-width="1"/></svg>
<div class="t" style="left:1175.50px;top:453.00px;font-size:11.5px;transform:scaleX(0.9485);transform-origin:0 0;">Renders Action:</div>
<div class="a" style="left:1260.4px;top:450px;width:155px;height:17.5px;background:linear-gradient(#f0f0f0,#e3e3e3);border:1px solid #adadad"></div>
<svg class="s" style="left:1401.4px;top:456.75px;" width="7" height="5" viewBox="0 0 7 5"><path d="M0.8 0.8L3.5 3.5L6.2 0.8" stroke="#444" stroke-width="1.3" fill="none"/></svg>
<div class="t" style="left:1042.20px;top:471.00px;font-size:11.5px;transform:scaleX(0.9471);transform-origin:0 0;">Column for picklist:</div>
<div class="a" style="left:1152.4px;top:468.2px;width:125px;height:18.2px;background:linear-gradient(#f0f0f0,#e3e3e3);border:1px solid #adadad"></div>
<svg class="s" style="left:1263.4px;top:475.3px;" width="7" height="5" viewBox="0 0 7 5"><path d="M0.8 0.8L3.5 3.5L6.2 0.8" stroke="#444" stroke-width="1.3" fill="none"/></svg>
<div class="t" style="left:1403.00px;top:472.00px;font-size:11.5px;transform:scaleX(0.9563);transform-origin:0 0;">Null:</div>
<div class="a" style="left:1428.3px;top:468px;width:53.5px;height:18.5px;background:linear-gradient(#f0f0f0,#e3e3e3);border:1px solid #adadad"></div>
<svg class="s" style="left:1467.8px;top:475.25px;" width="7" height="5" viewBox="0 0 7 5"><path d="M0.8 0.8L3.5 3.5L6.2 0.8" stroke="#444" stroke-width="1.3" fill="none"/></svg>
<div class="t" style="left:1434.00px;top:472.00px;font-size:11.5px;transform:scaleX(0.8912);transform-origin:0 0;">None</div>
<div class="t" style="left:1485.20px;top:472.00px;font-size:11.5px;transform:scaleX(0.9184);transform-origin:0 0;">NullRep:</div>
<div class="a" style="left:1540.2px;top:469px;width:99.5px;height:17.5px;background:#fff;border:1px solid #9c9c9c"></div>
<div class="t" style="left:1042.20px;top:492.00px;font-size:11.5px;transform:scaleX(0.9722);transform-origin:0 0;">Is static:</div>
<svg class="s" style="left:1153.4px;top:491.3px;" width="13" height="13" viewBox="0 0 13 13"><rect x="0.5" y="0.5" width="12" height="12" fill="#fff" stroke="#555" stroke-width="1"/></svg>
<div class="t" style="left:1183.00px;top:492.00px;font-size:11.5px;transform:scaleX(0.9418);transform-origin:0 0;">Is Groupbox:</div>
<svg class="s" style="left:1250.5px;top:491.3px;" width="13" height="13" viewBox="0 0 13 13"><rect x="0.5" y="0.5" width="12" height="12" fill="#fff" stroke="#555" stroke-width="1"/></svg>
<div class="t" style="left:1280.20px;top:492.00px;font-size:11.5px;transform:scaleX(0.9518);transform-origin:0 0;">Include in Groupbox:</div>
<div class="a" style="left:1384.5px;top:488px;width:27px;height:20.5px;background:linear-gradient(#f0f0f0,#e3e3e3);border:1px solid #adadad"></div>
<svg class="s" style="left:1397.5px;top:496.25px;" width="7" height="5" viewBox="0 0 7 5"><path d="M0.8 0.8L3.5 3.5L6.2 0.8" stroke="#444" stroke-width="1.3" fill="none"/></svg>
<div class="t" style="left:1042.20px;top:511.00px;font-size:11.5px;transform:scaleX(0.9479);transform-origin:0 0;">Readonly Expression</div>
<div class="a" style="left:1152.4px;top:509.4px;width:467.5px;height:15.5px;background:#fff;border:1px solid #9c9c9c"></div>
<div class="a" style="left:1619.5px;top:509.4px;width:20.5px;height:18px;background:#e1e1e1;border:1px solid #8c8c8c"></div>
<div class="t" style="left:1625.00px;top:515.00px;font-size:9px;transform:scaleX(1.0665);transform-origin:0 0;">...</div>
<div class="t" style="left:1042.20px;top:529.00px;font-size:11.5px;transform:scaleX(0.9490);transform-origin:0 0;">Visible Expression:</div>
<div class="a" style="left:1152.4px;top:526.5px;width:372px;height:15.5px;background:#fff;border:1px solid #9c9c9c"></div>
<svg class="s" style="left:1526.4px;top:528px;" width="13" height="13" viewBox="0 0 13 13"><rect x="0.5" y="0.5" width="12" height="12" fill="#fff" stroke="#555" stroke-width="1"/></svg>
<div class="t" style="left:1545.00px;top:527.00px;font-size:11.5px;transform:scaleX(0.9560);transform-origin:0 0;">FollowEnable</div>
<div class="a" style="left:1619.5px;top:526px;width:20.5px;height:19px;background:#e1e1e1;border:1px solid #8c8c8c"></div>
<div class="t" style="left:1625.00px;top:533.00px;font-size:9px;transform:scaleX(1.0665);transform-origin:0 0;">...</div>
<div class="t" style="left:1042.20px;top:548.00px;font-size:11.5px;transform:scaleX(0.9697);transform-origin:0 0;">Style ref:</div>
<div class="a" style="left:1152.4px;top:544.6px;width:252px;height:17.5px;background:#fff;border:1px solid #9c9c9c"></div>
<svg class="s" style="left:1406.2px;top:546px;" width="13" height="13" viewBox="0 0 13 13"><rect x="0.5" y="0.5" width="12" height="12" fill="#fff" stroke="#555" stroke-width="1"/></svg>
<div class="t" style="left:1425.00px;top:545.00px;font-size:11.5px;transform:scaleX(0.8866);transform-origin:0 0;">IsExp</div>
<div class="a" style="left:1455.3px;top:544.6px;width:20px;height:17.5px;background:#ececec;border:1px solid #d5d5d5"></div>
<div class="t" style="left:1460.00px;top:550.00px;font-size:9px;color:#888;transform:scaleX(1.0665);transform-origin:0 0;">...</div>
<div class="a" style="left:1475px;top:544.6px;width:51.5px;height:17.5px;background:#e1e1e1;border:1px solid #8c8c8c"></div>
<div class="t" style="left:1477.00px;top:549.00px;font-size:11.5px;transform:scaleX(0.9210);transform-origin:0 0;">Pick Style</div>
<div class="a" style="left:1606.7px;top:544.6px;width:32.5px;height:17.5px;background:#e1e1e1;border:1px solid #8c8c8c"></div>
<div class="t" style="left:1609.00px;top:549.00px;font-size:11.5px;transform:scaleX(0.8941);transform-origin:0 0;">Styles</div>
<div class="a" style="left:1611px;top:569px;width:29.5px;height:293px;background:#e6e6e6"></div>
<div class="a" style="left:1611px;top:598.3px;width:29.5px;height:1px;background:#cfcfcf"></div>
<div class="a" style="left:1611px;top:627.6px;width:29.5px;height:1px;background:#cfcfcf"></div>
<div class="a" style="left:1611px;top:656.9px;width:29.5px;height:1px;background:#cfcfcf"></div>
<div class="a" style="left:1611px;top:686.2px;width:29.5px;height:1px;background:#cfcfcf"></div>
<div class="a" style="left:1611px;top:715.5px;width:29.5px;height:1px;background:#cfcfcf"></div>
<div class="a" style="left:1611px;top:744.8px;width:29.5px;height:1px;background:#cfcfcf"></div>
<div class="a" style="left:1611px;top:774.1px;width:29.5px;height:1px;background:#cfcfcf"></div>
<div class="a" style="left:1611px;top:803.4px;width:29.5px;height:1px;background:#cfcfcf"></div>
<div class="a" style="left:1611px;top:832.7px;width:29.5px;height:1px;background:#cfcfcf"></div>
<div class="a" style="left:1611px;top:862.0px;width:29.5px;height:1px;background:#cfcfcf"></div>
<svg class="s" style="left:1617.8px;top:576.7px;" width="16" height="16" viewBox="0 0 16 16"><rect x="2" y="4" width="10" height="10" fill="none" stroke="#222" stroke-width="1.6"/><path d="M6 10L13 3L14.5 1.5" stroke="#222" stroke-width="2.2"/></svg>
<svg class="s" style="left:1617.8px;top:606.3px;" width="16" height="16" viewBox="0 0 16 16"><path d="M2 2H14V5.5H12.5L12 3.8H9.2V13.5H11V15H5V13.5H6.8V3.8H4L3.5 5.5H2Z" fill="#111"/></svg>
<svg class="s" style="left:1617.8px;top:635.6px;" width="16" height="16" viewBox="0 0 16 16"><rect x="3" y="5" width="9" height="8" fill="none" stroke="#222" stroke-width="1.2"/><path d="M5 8.5L7.5 11L12.5 3.5" stroke="#222" stroke-width="1.5" fill="none"/></svg>
<svg class="s" style="left:1617.8px;top:664.5px;" width="16" height="16" viewBox="0 0 16 16"><path d="M1.5 4H10M1.5 7.5H10M1.5 11H10" stroke="#222" stroke-width="1.3"/><rect x="1.5" y="3" width="8.5" height="9" fill="none" stroke="#222" stroke-width="1.2"/><path d="M13 3V12M10.8 9.5L13 12.5L15.2 9.5" stroke="#222" stroke-width="1.4" fill="none"/></svg>
<svg class="s" style="left:1617.8px;top:693.4px;" width="16" height="16" viewBox="0 0 16 16"><rect x="2" y="3" width="12" height="12" fill="none" stroke="#222" stroke-width="1.3"/><rect x="2" y="3" width="12" height="3" fill="#222"/><path d="M4.5 1.5V4M11.5 1.5V4" stroke="#222" stroke-width="1.3"/><path d="M3.5 8.5H12.5M3.5 11H12.5M3.5 13.3H12.5M5.5 7V14.5M8 7V14.5M10.5 7V14.5" stroke="#222" stroke-width="0.7"/></svg>
<svg class="s" style="left:1617.8px;top:722.3px;" width="16" height="16" viewBox="0 0 16 16"><rect x="2" y="2" width="12" height="12" fill="none" stroke="#222" stroke-width="1.3"/><rect x="3.5" y="3.5" width="9" height="9" fill="#444"/><circle cx="8" cy="6.5" r="2" fill="#fff"/><path d="M4.5 12L8 9L11.5 12Z" fill="#fff"/></svg>
<svg class="s" style="left:1617.8px;top:751.7px;" width="16" height="16" viewBox="0 0 16 16"><rect x="1.5" y="4" width="13" height="8" rx="2.5" fill="none" stroke="#222" stroke-width="1.3"/><text x="8" y="10" font-size="5" text-anchor="middle" font-family="Liberation Sans" font-weight="bold" fill="#222">btn</text></svg>
<svg class="s" style="left:1617.8px;top:781px;" width="16" height="16" viewBox="0 0 16 16"><rect x="2" y="2" width="12" height="12" fill="#fff" stroke="#222" stroke-width="1.3"/><text x="3.5" y="7" font-size="5" font-family="Liberation Sans" font-weight="bold" fill="#222">list</text><path d="M3 8.5H13M3 10.5H13M3 12.5H13" stroke="#444" stroke-width="0.9"/></svg>
<svg class="s" style="left:1617.8px;top:810.3px;" width="16" height="16" viewBox="0 0 16 16"><path d="M8 3L13 5.5V11L8 13.5L3 11V5.5Z" fill="#333"/><path d="M3 5.5L8 8L13 5.5M8 8V13.5" stroke="#bbb" stroke-width="0.8" fill="none"/><path d="M2.5 3.5Q0.5 8.5 2.5 13.5M13.5 3.5Q15.5 8.5 13.5 13.5" stroke="#333" stroke-width="1" fill="none"/></svg>
<svg class="s" style="left:1617.8px;top:840px;" width="16" height="16" viewBox="0 0 16 16"><rect x="1.5" y="1" width="13" height="13.5" fill="#fff" stroke="#222" stroke-width="1.1"/><path d="M1.5 3.5H14.5" stroke="#222"/><path d="M10 2.2H13.5" stroke="#222" stroke-dasharray="0.8 0.7"/><rect x="3" y="5.5" width="10" height="9.5" fill="#fff" stroke="#222" stroke-width="1"/><circle cx="6.8" cy="10" r="1.6" fill="none" stroke="#222" stroke-width="0.9"/><circle cx="9.2" cy="10" r="1.6" fill="none" stroke="#222" stroke-width="0.9"/><path d="M4.6 8Q3.6 10 4.6 12M11.4 8Q12.4 10 11.4 12" stroke="#222" stroke-width="0.8" fill="none"/></svg>
<div class="a" style="left:1063.5px;top:605.4px;width:514.5px;height:221px;background:#e4e4e4"></div>
<svg class="s" style="left:1063.5px;top:605.4px;" width="515" height="222" viewBox="0 0 515 222"><path d="M52.5 0V222" stroke="#d8d8d8"/><path d="M103.5 0V222" stroke="#d8d8d8"/><path d="M154.5 0V222" stroke="#d8d8d8"/><path d="M206.5 0V222" stroke="#d8d8d8"/><path d="M257.5 0V222" stroke="#d8d8d8"/><path d="M308.5 0V222" stroke="#d8d8d8"/><path d="M359.5 0V222" stroke="#d8d8d8"/><path d="M410.5 0V222" stroke="#d8d8d8"/><path d="M462.5 0V222" stroke="#d8d8d8"/><path d="M513.5 0V222" stroke="#d8d8d8"/><path d="M0 31.5H515" stroke="#d8d8d8"/><path d="M0 66.5H515" stroke="#d8d8d8"/><path d="M0 97.5H515" stroke="#d8d8d8"/><path d="M0 127.5H515" stroke="#d8d8d8"/><path d="M0 156.5H515" stroke="#d8d8d8"/><path d="M0 183.5H515" stroke="#d8d8d8"/></svg>
<div class="a" style="left:1063.5px;top:605.4px;width:504.7px;height:211.4px;background:#d3d3d3"></div>
<div class="a" style="left:1064.6px;top:608.7px;width:250px;height:26.5px;background:#fff;border:1px solid #c4c4c4;border-right-color:#a5a5a5;border-bottom:2px solid #8e8e8e;border-radius:1px"></div>
<div class="t" style="left:1068.60px;top:612.00px;font-size:9.5px;color:#8a8a8a;">Name</div>
<div class="a" style="left:1064.6px;top:639px;width:200px;height:30.5px;background:#fff;border:1px solid #c4c4c4;border-right-color:#a5a5a5;border-bottom:2px solid #8e8e8e;border-radius:1px"></div>
<div class="t" style="left:1068.60px;top:642.00px;font-size:9.5px;color:#8a8a8a;">Age (Years)</div>
<div class="a" style="left:1271px;top:639px;width:144px;height:32px;background:#3565a9;border-radius:2px"></div>
<div class="t" style="left:1311.70px;top:648.00px;font-size:14px;font-weight:bold;color:#fff;transform:scaleX(0.9716);transform-origin:0 0;">Delete Me</div>
<div class="a" style="left:1064.6px;top:673.6px;width:200px;height:28px;background:#fff;border:1px solid #c4c4c4;border-right-color:#a5a5a5;border-bottom:2px solid #8e8e8e;border-radius:1px"></div>
<div class="t" style="left:1068.60px;top:677.00px;font-size:9.5px;color:#8a8a8a;">I am in control</div>
<div class="a" style="left:1064.6px;top:704.8px;width:200px;height:27px;background:#fff;border:1px solid #c4c4c4;border-right-color:#a5a5a5;border-bottom:2px solid #8e8e8e;border-radius:1px"></div>
<div class="t" style="left:1068.60px;top:708.00px;font-size:9.5px;color:#8a8a8a;">New Column2</div>
<div class="a" style="left:1267.7px;top:672px;width:201px;height:30.5px;background:#fefee6;border:1px solid #e9e94a"></div>
<div class="a" style="left:1268.7px;top:673.5px;width:198px;height:28px;border:1px solid #b8b8a0;border-left:none"></div>
<div class="t" style="left:1273.60px;top:677.00px;font-size:10px;color:#a8a8a8;transform:scaleX(0.9784);transform-origin:0 0;">New Column</div>
<div class="a" style="left:1437.5px;top:671.3px;width:30.5px;height:10px;background:#33ee33"></div>
<div class="t" style="left:1439.00px;top:673.00px;font-size:8.5px;color:#111;transform:scaleX(1.0791);transform-origin:0 0;">UIFirst</div>
<svg class="s" style="left:1460px;top:694px;" width="8" height="8" viewBox="0 0 8 8"><path d="M7 1L1 7M7 4L4 7" stroke="#999" stroke-width="0.8"/></svg>
<div class="t" style="left:1074.40px;top:737.00px;font-size:16px;color:#111;transform:scaleX(1.0045);transform-origin:0 0;">Cars I Used To Own</div>
<div class="a" style="left:1064.6px;top:757.5px;width:150px;height:59px;background:#fff;border:1px solid #b5b5b5;border-radius:5px"></div>
<div class="a" style="left:1065px;top:782.5px;width:149px;height:1px;background:#bbb"></div>
<div class="t" style="left:1069.00px;top:760.00px;font-size:10.5px;color:#555;width:25px;overflow:hidden">as</div>
<div class="t" style="left:1069.00px;top:771.00px;font-size:10.5px;color:#555;width:25px;overflow:hidden">String</div>
<div class="t" style="left:1113.50px;top:760.00px;font-size:10.5px;color:#555;width:25.5px;overflow:hidden">Regis</div>
<div class="t" style="left:1113.50px;top:771.00px;font-size:10.5px;color:#555;width:25.5px;overflow:hidden">Numb</div>
<svg class="s" style="left:1095px;top:764px;" width="8" height="7" viewBox="0 0 8 7"><path d="M0 0H8L5 4V7L3 6V4Z" fill="#ddd"/></svg>
<svg class="s" style="left:1141px;top:764px;" width="8" height="7" viewBox="0 0 8 7"><path d="M0 0H8L5 4V7L3 6V4Z" fill="#ddd"/></svg>
<svg class="s" style="left:1188px;top:762px;" width="22" height="7" viewBox="0 0 22 7"><circle cx="3.5" cy="3.5" r="2.4" fill="#3a5fa8"/><circle cx="10.5" cy="3.5" r="2.4" fill="#3a5fa8"/><circle cx="17.5" cy="3.5" r="2.4" fill="#3a5fa8"/></svg>
<svg class="s" style="left:1037.2px;top:867.8px;" width="13" height="13" viewBox="0 0 13 13"><rect x="0.5" y="0.5" width="12" height="12" fill="#fff" stroke="#555" stroke-width="1"/></svg>
<div class="t" style="left:1056.30px;top:867.00px;font-size:11.5px;transform:scaleX(0.9425);transform-origin:0 0;">Show grid lines</div>
<svg class="s" style="left:1134.7px;top:868.5px;" width="13" height="13" viewBox="0 0 13 13"><rect x="0.5" y="0.5" width="12" height="12" fill="#fff" stroke="#555" stroke-width="1"/></svg>
<div class="t" style="left:1153.40px;top:867.00px;font-size:11.5px;transform:scaleX(0.9413);transform-origin:0 0;">Show tab-order</div>
<div class="a" style="left:1231.4px;top:863.5px;width:16px;height:21.5px;background:#e1e1e1;border:1px solid #8c8c8c"></div>
<div class="t" style="left:1233.50px;top:869.00px;font-size:11.5px;transform:scaleX(0.9394);transform-origin:0 0;">Fit</div>
<div class="t" style="left:1036.00px;top:892.00px;font-size:8px;transform:scaleX(0.9868);transform-origin:0 0;">Screen size marker</div>
<div class="a" style="left:1105px;top:889px;width:18.5px;height:11.5px;background:#fff;border:1px solid #9c9c9c"></div>
<div class="t" style="left:1106.50px;top:892.00px;font-size:7.5px;transform:scaleX(0.9191);transform-origin:0 0;">758</div>
<div class="t" style="left:1124.00px;top:892.00px;font-size:8px;transform:scaleX(0.9370);transform-origin:0 0;">X</div>
<div class="a" style="left:1129.4px;top:889px;width:19px;height:11.5px;background:#fff;border:1px solid #9c9c9c"></div>
<div class="t" style="left:1131.00px;top:892.00px;font-size:7.5px;transform:scaleX(0.9191);transform-origin:0 0;">600</div>
<div class="t" style="left:1150.00px;top:892.00px;font-size:8px;transform:scaleX(0.9711);transform-origin:0 0;">SuggestedZoom</div>
<div class="a" style="left:1207.7px;top:889px;width:29px;height:11.5px;background:#fff;border:1px solid #9c9c9c"></div>
<div class="a" style="left:1237.4px;top:886.5px;width:78.3px;height:17.5px;background:#e1e1e1;border:1px solid #8c8c8c"></div>
<div class="t" style="left:1239.50px;top:892.00px;font-size:8px;transform:scaleX(0.9907);transform-origin:0 0;">Set shrink zoom to fit</div>
<div class="a" style="left:1326.2px;top:886.5px;width:148.2px;height:17.5px;background:#e1e1e1;border:1px solid #8c8c8c"></div>
<div class="t" style="left:1327.50px;top:891.00px;font-size:11.5px;transform:scaleX(0.9479);transform-origin:0 0;">WebApp Prototype Edit-Mode</div>
<svg class="s" style="left:1010px;top:440px;filter:drop-shadow(1px 2px 2px rgba(0,0,0,0.30))" width="270" height="40" viewBox="0 0 270 40"><rect x="11.8" y="8.1" width="244.8" height="22.2" rx="6" fill="none" stroke="#14aee8" stroke-width="4.4"/></svg>
<svg class="s" style="left:0px;top:0px;left:0;top:0;filter:drop-shadow(1px 2px 2px rgba(0,0,0,0.30))" width="1914" height="1149" viewBox="0 0 1914 1149"><path d="M1158.4 461L1158.4 488.8L1154.3 485.1L1109.1 570.2L1143.9 481.4L1137.2 480Z" fill="#08b0ee"/></svg>
<svg class="s" style="left:0px;top:0px;left:0;top:0;filter:drop-shadow(1px 2px 2px rgba(0,0,0,0.30))" width="1914" height="1149" viewBox="0 0 1914 1149"><path d="M1409.6 704.4L1432 721.3L1426.5 722.6L1460.5 802.2L1415.4 727.8L1410.9 732.4Z" fill="#08b0ee"/></svg>
<div class="a" style="left:1087.7px;top:569.9000000000001px;width:29.6px;height:29.6px;background:#2ba7d8;border:1.5px solid #1cb0ea;border-radius:50%;box-shadow:1px 2px 3px rgba(0,0,0,0.35)"></div>
<div class="t" style="left:1098.20px;top:579.00px;font-size:14.5px;color:#fff;transform:scaleX(1.0542);transform-origin:0 0;">2</div>
<div class="a" style="left:1459.8px;top:801.8000000000001px;width:29.6px;height:29.6px;background:#2ba7d8;border:1.5px solid #1cb0ea;border-radius:50%;box-shadow:1px 2px 3px rgba(0,0,0,0.35)"></div>
<div class="t" style="left:1470.30px;top:811.00px;font-size:14.5px;color:#fff;transform:scaleX(1.0542);transform-origin:0 0;">1</div></body></html>
